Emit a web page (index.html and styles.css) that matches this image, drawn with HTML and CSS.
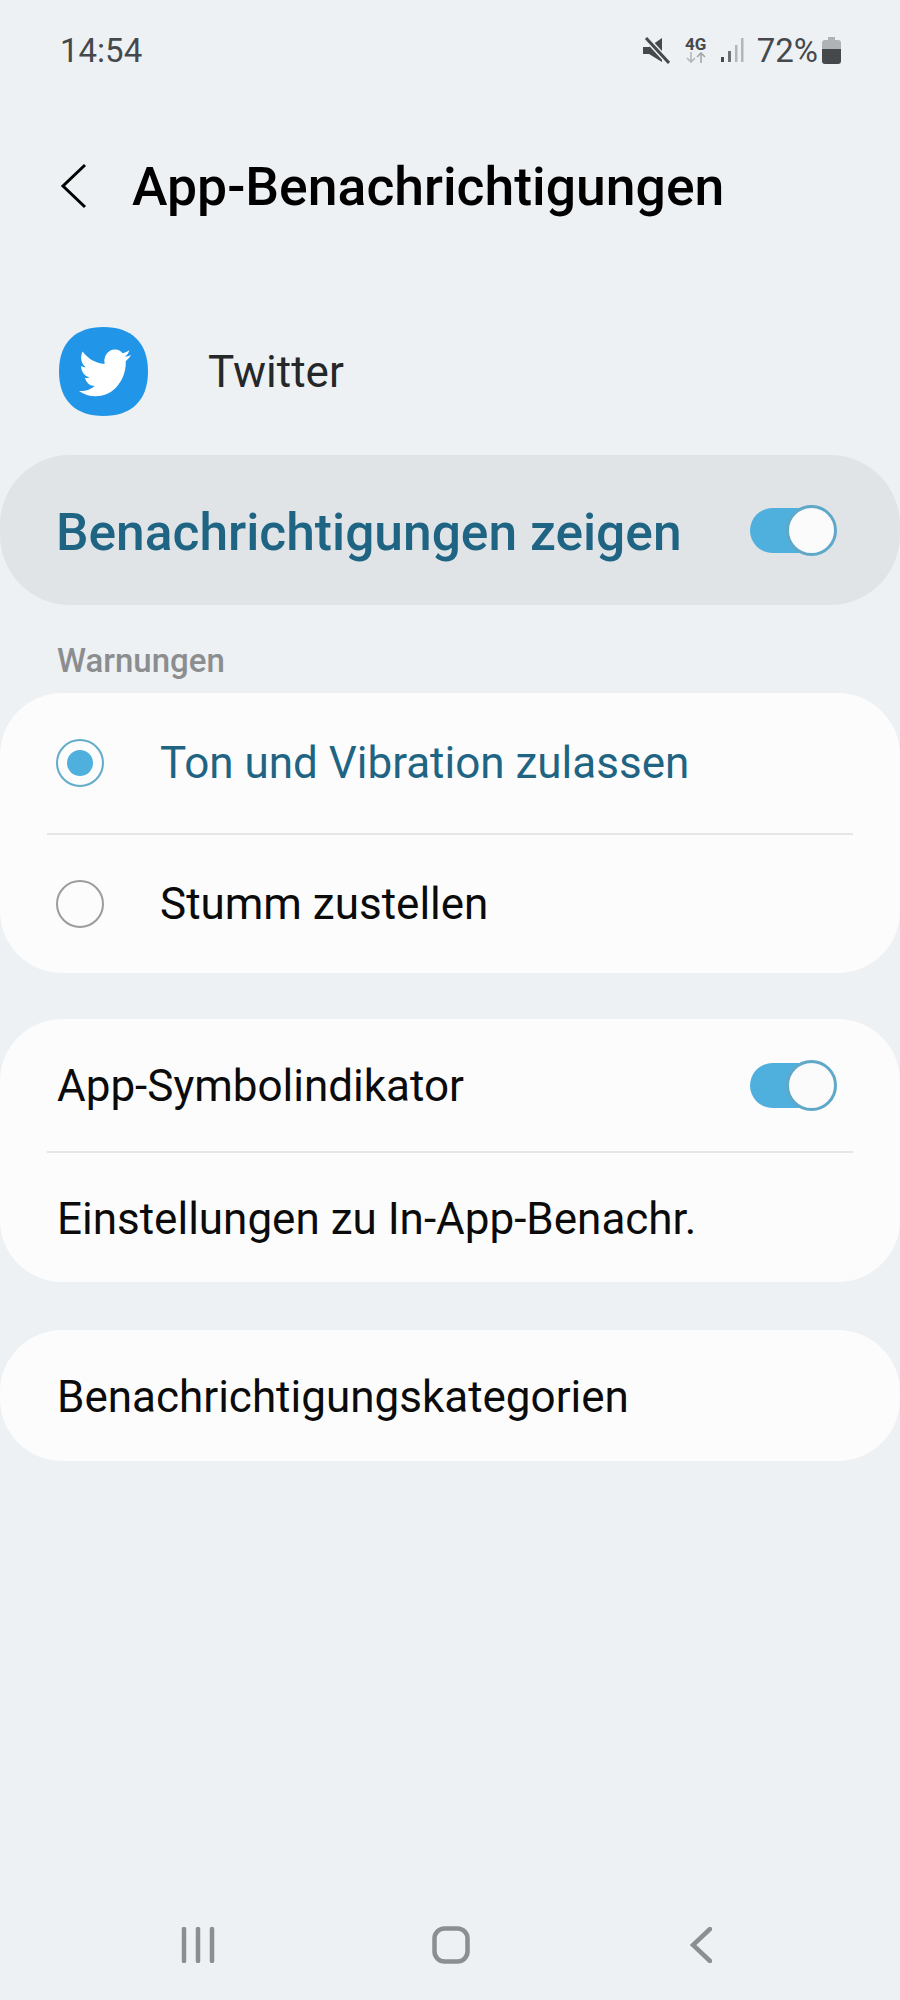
FILE: index.html
```html
<!DOCTYPE html>
<html lang="de">
<head>
    <meta charset="UTF-8">
    <meta name="viewport" content="width=device-width, initial-scale=1.0">
    <title>App-Benachrichtigungen</title>
    <link rel="stylesheet" href="styles.css">
</head>
<body>
    <div class="screen">
        <!-- Statusleiste -->
        <div class="status-bar">
            <span class="clock">14:54</span>
            <div class="status-icons">
                <svg class="icon-mute" width="27" height="27" viewBox="0 0 27 27">
                    <path d="M0 10h6L19 1v24L6 17H0z" fill="#45494c"/>
                    <path d="M3 1l23 25" stroke="#edf1f4" stroke-width="6" fill="none"/>
                    <path d="M3 1l23 25" stroke="#45494c" stroke-width="3" fill="none"/>
                </svg>
                <div class="net">
                    <span class="net-label">4G</span>
                    <svg width="22" height="11" viewBox="0 0 22 11">
                        <path d="M6 0v10M2 6l4 4 4-4" stroke="#b3b6b8" stroke-width="1.6" fill="none"/>
                        <path d="M16 11V1M12 5l4-4 4 4" stroke="#a3a6a8" stroke-width="1.6" fill="none"/>
                    </svg>
                </div>
                <svg class="icon-signal" width="24" height="26" viewBox="0 0 24 26">
                    <rect x="1" y="20" width="3" height="5" fill="#45494c"/>
                    <rect x="8" y="14" width="3" height="11" fill="#6d7173"/>
                    <rect x="15" y="8" width="2.5" height="17" fill="#b3b6b8"/>
                    <rect x="21" y="1" width="2.5" height="24" fill="#b3b6b8"/>
                </svg>
                <span class="percent">72%</span>
                <svg width="19" height="27" viewBox="0 0 19 27">
                    <path d="M6 0h7v3h3q3 0 3 3v6H0V6q0-3 3-3h3z" fill="#b0b3b5"/>
                    <path d="M0 12h19v12q0 3-3 3H3q-3 0-3-3z" fill="#45494c"/>
                </svg>
            </div>
        </div>

        <!-- Titel -->
        <div class="header">
            <svg class="back" width="28" height="46" viewBox="0 0 28 46">
                <path d="M26 2L4 23l22 21" stroke="#000" stroke-width="3" fill="none"/>
            </svg>
            <h1>App-Benachrichtigungen</h1>
        </div>

        <div class="app-row">
            <svg class="app-icon" width="89" height="89" viewBox="0 0 89 89">
                <path d="M44.5 0C72 0 89 15 89 44.5S72 89 44.5 89 0 74 0 44.5 17 0 44.5 0z" fill="#2196e8"/>
                <path transform="translate(20 17) scale(2.17 2.4)" fill="#fff" d="M23.953 4.57a10 10 0 01-2.825.775 4.958 4.958 0 002.163-2.723c-.951.555-2.005.959-3.127 1.184a4.92 4.92 0 00-8.384 4.482C7.69 8.095 4.067 6.13 1.64 3.162a4.822 4.822 0 00-.666 2.475c0 1.71.87 3.213 2.188 4.096a4.904 4.904 0 01-2.228-.616v.06a4.923 4.923 0 003.946 4.827 4.996 4.996 0 01-2.212.085 4.936 4.936 0 004.604 3.417 9.867 9.867 0 01-6.102 2.105c-.39 0-.779-.023-1.17-.067a13.995 13.995 0 007.557 2.209c9.053 0 13.998-7.496 13.998-13.985 0-.21 0-.42-.015-.63A9.935 9.935 0 0024 4.59z"/>
            </svg>
            <span class="app-name">Twitter</span>
        </div>

        <div class="master">
            <span class="master-label">Benachrichtigungen zeigen</span>
            <span class="switch"><span class="thumb"></span></span>
        </div>

        <div class="section-title">Warnungen</div>

        <div class="card card-alerts">
            <div class="row radio-row first-radio">
                <span class="radio checked"></span>
                <span class="label active">Ton und Vibration zulassen</span>
            </div>
            <div class="divider"></div>
            <div class="row radio-row">
                <span class="radio"></span>
                <span class="label">Stumm zustellen</span>
            </div>
        </div>

        <div class="card card-badges">
            <div class="row badge-row">
                <span class="label">App-Symbolindikator</span>
                <span class="switch"><span class="thumb"></span></span>
            </div>
            <div class="divider"></div>
            <div class="row inapp-row">
                <span class="label">Einstellungen zu In-App-Benachr.</span>
            </div>
        </div>

        <div class="card card-single">
            <div class="row single-row">
                <span class="label">Benachrichtigungskategorien</span>
            </div>
        </div>

        <!-- Navigationsleiste -->
        <div class="nav-bar">
            <svg width="34" height="36" viewBox="0 0 34 36">
                <path d="M3 2v32M17 2v32M31 2v32" stroke="#8b8f92" stroke-width="4.5" stroke-linecap="round" fill="none"/>
            </svg>
            <svg class="nav-home" width="38" height="38" viewBox="0 0 38 38">
                <rect x="2.5" y="2.5" width="33" height="33" rx="10" stroke="#8b8f92" stroke-width="4.5" fill="none"/>
            </svg>
            <svg class="nav-back" width="22" height="36" viewBox="0 0 22 36">
                <path d="M20 2L3 18l17 16" stroke="#8b8f92" stroke-width="4.5" stroke-linecap="round" fill="none"/>
            </svg>
        </div>
    </div>
</body>
</html>
```

FILE: styles.css
```css
/* Style général */
body {
    font-family: Roboto, "Noto Sans", sans-serif;
    margin: 0;
    padding: 0;
    background-color: #edf1f4;
    color: #000;
}

.screen {
    width: 900px;
    height: 2000px;
    display: flex;
    flex-direction: column;
}

/* Statusleiste */
.status-bar {
    display: flex;
    justify-content: space-between;
    align-items: center;
    height: 50px;
    margin-top: 25px;
    padding: 0 59px 0 60px;
}

.clock {
    font-size: 33px;
    color: #45494c;
}

.status-icons {
    display: flex;
    align-items: center;
}

.icon-mute {
    margin-right: 14px;
}

.net {
    display: flex;
    flex-direction: column;
    align-items: center;
    width: 24px;
    margin-right: 12px;
}

.net-label {
    font-size: 17px;
    font-weight: 700;
    line-height: 15px;
    color: #45494c;
}

.icon-signal {
    margin-right: 13px;
}

.percent {
    font-size: 33px;
    color: #45494c;
    margin-right: 4px;
}

/* Titel */
.header {
    display: flex;
    align-items: center;
    height: 60px;
    margin-top: 81px;
    padding-left: 59px;
}

.back {
    margin-right: 45px;
}

h1 {
    margin: 0;
    padding-top: 2px;
    font-size: 53.5px;
    font-weight: 500;
    line-height: 60px;
}

.app-row {
    display: flex;
    align-items: center;
    margin-top: 111px;
    padding-left: 59px;
}

.app-name {
    margin-left: 60px;
    font-size: 44px;
    color: #252729;
}

.app-icon {
    flex-shrink: 0;
}

/* Hauptschalter */
.master {
    display: flex;
    justify-content: space-between;
    align-items: center;
    height: 150px;
    margin-top: 39px;
    padding: 0 64px 0 56px;
    background: #e1e4e7;
    border-radius: 70px;
}

.master-label {
    padding-top: 4px;
    font-size: 51.5px;
    font-weight: 500;
    color: #1f6583;
}

.switch {
    display: block;
    position: relative;
    width: 86px;
    height: 45px;
    border-radius: 23px;
    background: #4fafdd;
    flex-shrink: 0;
}

.thumb {
    position: absolute;
    right: -1px;
    top: -3px;
    box-sizing: border-box;
    width: 51px;
    height: 51px;
    border: 3px solid #5fa8c8;
    border-radius: 50%;
    background: #fbfbfb;
}

.section-title {
    height: 88px;
    padding-left: 57px;
    font-size: 33px;
    font-weight: 500;
    line-height: 112px;
    color: #8b8d8f;
}

/* Karten */
.card {
    background: #fcfcfc;
    border-radius: 62px;
}

.card-badges {
    margin-top: 46px;
}

.card-single {
    margin-top: 48px;
}

.row {
    display: flex;
    align-items: center;
    padding: 0 64px 0 57px;
    justify-content: space-between;
}

.radio-row {
    height: 138px;
    padding-left: 56px;
    justify-content: flex-start;
}

.first-radio {
    height: 140px;
}

.badge-row {
    height: 132px;
}

.inapp-row {
    height: 129px;
}

.single-row {
    height: 131px;
}

.badge-row .label,
.inapp-row .label,
.single-row .label {
    padding-top: 2px;
}

.single-row .label {
    padding-top: 3px;
}

.label {
    font-size: 44px;
    color: #0b0b0b;
}

.label.active {
    color: #1f6583;
}

.radio {
    display: flex;
    justify-content: center;
    align-items: center;
    box-sizing: border-box;
    width: 48px;
    height: 48px;
    margin-right: 56px;
    border: 2px solid #9c9c9c;
    border-radius: 50%;
}

.radio.checked {
    border-color: #62abc9;
}

.radio.checked::after {
    content: "";
    width: 26px;
    height: 26px;
    border-radius: 50%;
    background: #4fafdd;
}

.divider {
    height: 2px;
    margin: 0 47px;
    background: #e6e6e7;
}

/* Navigationsleiste */
.nav-bar {
    display: flex;
    align-items: center;
    margin-top: auto;
    height: 38px;
    margin-bottom: 36px;
    padding-left: 181px;
}

.nav-home {
    margin-left: 217px;
}

.nav-back {
    margin-left: 220px;
}
```
